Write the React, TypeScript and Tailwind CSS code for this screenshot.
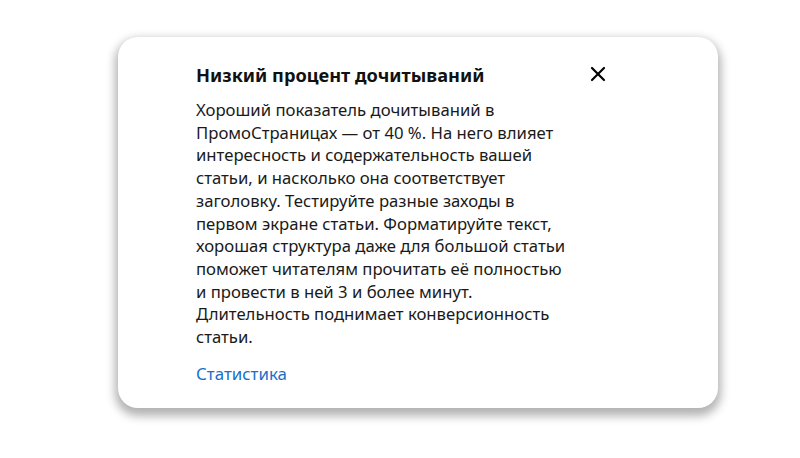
import { X } from "lucide-react";

const lines = [
  "Хороший показатель дочитываний в",
  "ПромоСтраницах — от 40 %. На него влияет",
  "интересность и содержательность вашей",
  "статьи, и насколько она соответствует",
  "заголовку. Тестируйте разные заходы в",
  "первом экране статьи. Форматируйте текст,",
  "хорошая структура даже для большой статьи",
  "поможет читателям прочитать её полностью",
  "и провести в ней 3 и более минут.",
  "Длительность поднимает конверсионность",
  "статьи.",
];

const App = () => {
  return (
    <div className="w-[800px] h-[458px] bg-white pt-[37px] pl-[118px] font-['Noto_Sans',sans-serif]">
      <div className="w-[600px] h-[371px] bg-white rounded-[20px] shadow-[0_5px_10px_3px_rgba(0,0,0,0.3)] pl-[78px] pr-[110px] pt-[24px]">
        <div className="flex items-start justify-between">
          <h2 className="text-[18.2px] font-bold text-[#111] leading-[28px]">Низкий процент дочитываний</h2>
          <X className="size-6 mt-[1px] -mr-[2px] text-black" strokeWidth={2.2} />
        </div>
        <p className="mt-[10px] text-[16.7px] leading-[22.7px] text-[#1a1a1a]">
          {lines.map((l, i) => (
            <span key={i} className="block whitespace-nowrap">{l}</span>
          ))}
        </p>
        <a className="block mt-[14px] text-[16.9px] leading-[22px] text-[#1a6fc9]">Статистика</a>
      </div>
    </div>
  );
};

export default App;
